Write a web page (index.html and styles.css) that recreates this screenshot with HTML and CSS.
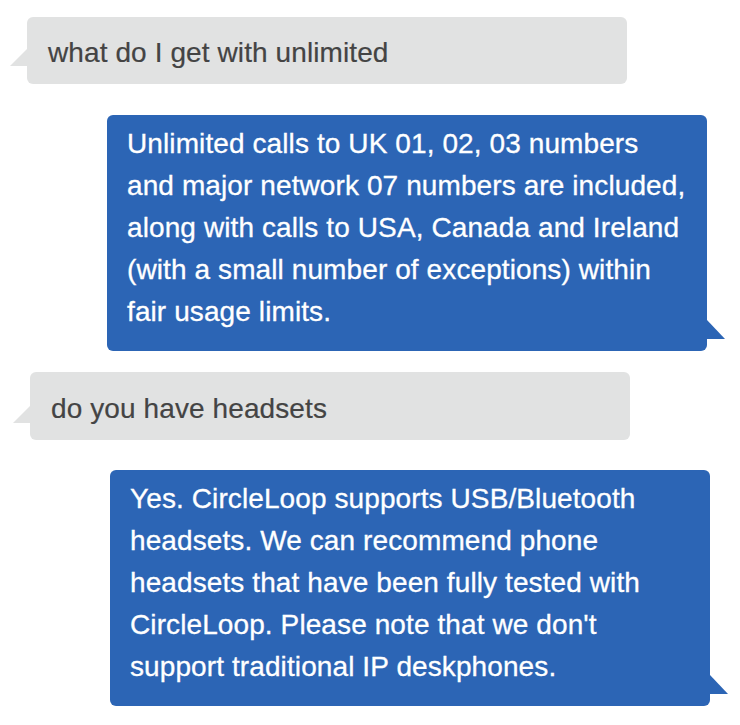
FILE: index.html
```html
<!DOCTYPE html>
<html lang="en">
<head>
<meta charset="utf-8">
<title>Chat</title>
<link rel="stylesheet" href="styles.css">
</head>
<body>
<div class="chat">
  <div class="msg msg-in msg-1">what do I get with unlimited</div>
  <div class="msg msg-out msg-2">Unlimited calls to UK 01, 02, 03 numbers and major network 07 numbers are included, along with calls to USA, Canada and Ireland (with a small number of exceptions) within fair usage limits.</div>
  <div class="msg msg-in msg-3">do you have headsets</div>
  <div class="msg msg-out msg-4">Yes. CircleLoop supports USB/Bluetooth headsets. We can recommend phone headsets that have been fully tested with CircleLoop. Please note that we don't support traditional IP deskphones.</div>
</div>
</body>
</html>
```
FILE: styles.css
```css
html, body {
  margin: 0;
  padding: 0;
  background: #ffffff;
}

.chat {
  display: flex;
  flex-direction: column;
  align-items: flex-start;
  padding-top: 17px;
  font-family: "Liberation Sans", Arial, Helvetica, sans-serif;
  font-size: 28px;
  line-height: 42px;
  letter-spacing: 0.1px;
}

.msg {
  position: relative;
  box-sizing: border-box;
  width: 600px;
  border-radius: 6px;
}

.msg::before {
  content: "";
  position: absolute;
  width: 18px;
  height: 18px;
}

.msg-in {
  background: #e1e2e2;
  color: #444444;
  padding: 15px 21px 10px 21px;
  -webkit-text-stroke: 0.2px #444444;
}

.msg-in::before {
  left: -17px;
  bottom: 18px;
  background: #e1e2e2;
  clip-path: polygon(100% 0, 100% 100%, 0 100%);
}

.msg-out {
  background: #2c65b5;
  color: #ffffff;
  padding: 8px 18px 18px 20px;
  -webkit-text-stroke: 0.3px #ffffff;
}

.msg-out::before {
  right: -18px;
  bottom: 12px;
  height: 19px;
  background: #2c65b5;
  clip-path: polygon(0 0, 100% 100%, 0 100%);
}

.msg-1 {
  margin-left: 27px;
}

.msg-2 {
  margin-left: 107px;
  margin-top: 31px;
}

.msg-3 {
  margin-left: 30px;
  margin-top: 21px;
  padding-top: 16px;
}

.msg-3::before {
  bottom: 17px;
}

.msg-4 {
  margin-left: 110px;
  margin-top: 30px;
}
```
